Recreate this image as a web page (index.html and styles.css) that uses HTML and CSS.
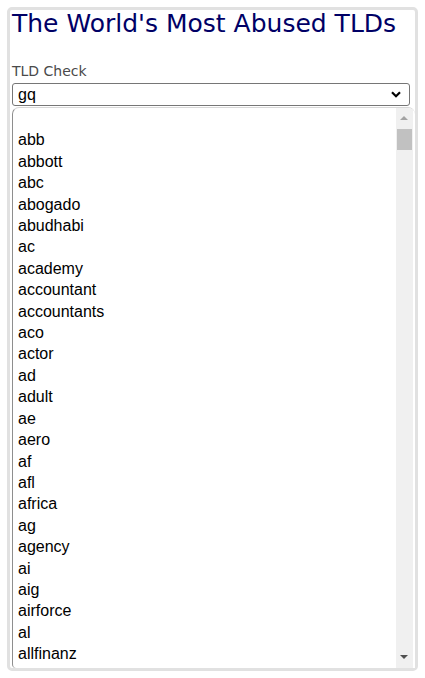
FILE: index.html
```html
<!DOCTYPE html>
<html lang="en">
<head>
    <meta charset="UTF-8">
    <meta name="viewport" content="width=device-width, initial-scale=1.0">
    <title>The World's Most Abused TLDs</title>
    <link rel="stylesheet" href="styles.css">
</head>
<body>
<div class="container">
    <h1>The World's Most Abused TLDs</h1>

    <label class="field-label" for="tld">TLD Check</label>
    <div class="select" id="tld">
        <span>gq</span>
        <svg class="chevron" width="10" height="7" viewBox="0 0 10 7">
            <path d="M1 1.2 L5 5.2 L9 1.2" fill="none" stroke="#000" stroke-width="2.2"/>
        </svg>
    </div>

    <div class="dropdown">
        <ul class="options">
            <li>&nbsp;</li>
            <li>abb</li>
            <li>abbott</li>
            <li>abc</li>
            <li>abogado</li>
            <li>abudhabi</li>
            <li>ac</li>
            <li>academy</li>
            <li>accountant</li>
            <li>accountants</li>
            <li>aco</li>
            <li>actor</li>
            <li>ad</li>
            <li>adult</li>
            <li>ae</li>
            <li>aero</li>
            <li>af</li>
            <li>afl</li>
            <li>africa</li>
            <li>ag</li>
            <li>agency</li>
            <li>ai</li>
            <li>aig</li>
            <li>airforce</li>
            <li>al</li>
            <li>allfinanz</li>
            <li>alsace</li>
        </ul>
        <div class="scrollbar">
            <div class="arrow arrow-up"></div>
            <div class="thumb"></div>
            <div class="track"></div>
            <div class="arrow arrow-down"></div>
        </div>
    </div>
</div>
</body>
</html>
```

FILE: styles.css
```css
body {
    margin: 0;
    padding: 7px;
    background: #fff;
}

.container {
    position: relative;
    box-sizing: border-box;
    height: 664px;
    border: 3px solid #e1e1e1;
    border-radius: 5px;
    padding: 0 2px;
    font-family: "DejaVu Sans", Verdana, sans-serif;
}

h1 {
    margin: 0;
    font-size: 25px;
    font-weight: normal;
    color: #000066;
    line-height: 27px;
    white-space: nowrap;
}

.field-label {
    display: block;
    margin-top: 26px;
    font-size: 14px;
    line-height: 17px;
    color: #4a4a4a;
}

.select {
    display: flex;
    align-items: center;
    justify-content: space-between;
    box-sizing: border-box;
    width: 398px;
    height: 23px;
    margin-top: 3px;
    padding: 0 8px 0 5px;
    border: 1px solid #767676;
    border-radius: 3px;
    font-family: "Liberation Sans", Arial, sans-serif;
    font-size: 16px;
    color: #000;
}

.dropdown {
    position: absolute;
    left: 2px;
    top: 97px;
    width: 403px;
    height: 561px;
    display: flex;
    box-sizing: border-box;
    background: #fff;
    border-left: 1px solid #8e8e8e;
    border-top: 1px solid #d8d8d8;
    border-radius: 7px 7px 0 4px;
    overflow: hidden;
}

.options {
    flex: 1;
    margin: 0;
    padding: 0;
    list-style: none;
    overflow: hidden;
    font-family: "Liberation Sans", Arial, sans-serif;
    font-size: 16px;
    color: #000;
}

.options li {
    line-height: 21.4px;
    padding-left: 5px;
}

.scrollbar {
    width: 17px;
    margin-right: 2px;
    display: flex;
    flex-direction: column;
    background: #f0f0f0;
}

.arrow {
    height: 21px;
    position: relative;
}

.arrow::after {
    content: "";
    position: absolute;
    left: 4px;
    border-left: 4px solid transparent;
    border-right: 4px solid transparent;
}

.arrow-up::after {
    top: 8px;
    border-bottom: 4px solid #a3a3a3;
}

.arrow-down::after {
    top: 8px;
    border-top: 4px solid #505050;
}

.thumb {
    height: 21px;
    margin: 0 1px;
    background: #c1c1c1;
}

.track {
    flex: 1;
}
```
